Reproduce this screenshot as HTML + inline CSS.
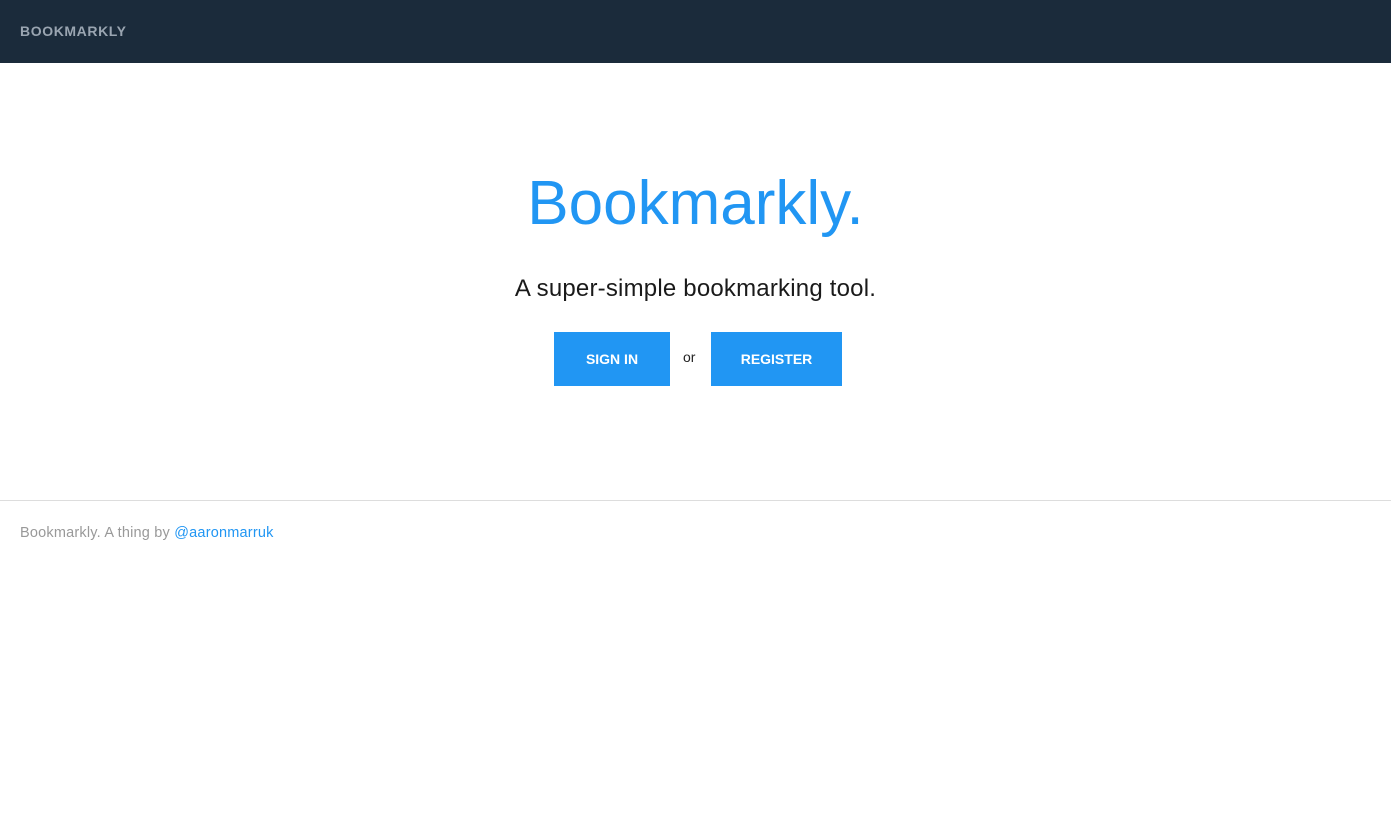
<!DOCTYPE html>
<html><head><style>
body{margin:0;width:1391px;height:830px;background:#fff;font-family:"Liberation Sans",sans-serif;overflow:hidden}
.nav{height:63px;background:#1b2b3b;position:relative}
.nav span{position:absolute;left:20px;top:23px;color:#9aa5b1;font-size:14px;font-weight:bold;letter-spacing:0.6px}
h1{position:absolute;top:166px;left:0;width:1391px;text-align:center;margin:0;font-weight:normal;font-size:62px;color:#2196f3;line-height:76px}
.sub{position:absolute;top:274px;left:0;width:1391px;text-align:center;font-size:24px;color:#1a1a1a;line-height:30px;letter-spacing:0.2px}
.btn{position:absolute;top:332px;height:54px;background:#2196f3;color:#fff;font-weight:bold;font-size:14px;line-height:54px;text-align:center}
.or{position:absolute;top:349px;left:683px;font-size:14px;color:#222}
hr{position:absolute;top:500px;left:0;width:1391px;margin:0;border:0;border-top:1px solid #ddd}
.foot{position:absolute;top:525px;left:20px;font-size:14.5px;color:#999;letter-spacing:0.2px}
.foot a{color:#2196f3;text-decoration:none}
</style></head><body>
<div class="nav"><span>BOOKMARKLY</span></div>
<h1>Bookmarkly.</h1>
<div class="sub">A super-simple bookmarking tool.</div>
<div class="btn" style="left:554px;width:116px">SIGN IN</div>
<div class="or">or</div>
<div class="btn" style="left:711px;width:131px">REGISTER</div>
<hr>
<div class="foot">Bookmarkly. A thing by <a>@aaronmarruk</a></div>
</body></html>
